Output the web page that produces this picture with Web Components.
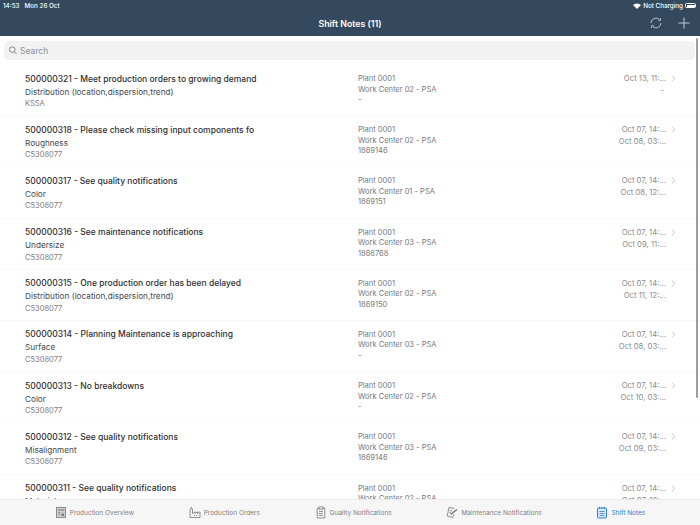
<!DOCTYPE html>
<html>
<head>
<meta charset="utf-8">
<title>Shift Notes</title>
<style>
  html, body { margin: 0; padding: 0; background: #fff; overflow: hidden; }
  body { font-family: Inter, "Liberation Sans", sans-serif; }
</style>
</head>
<body>
<shift-app></shift-app>

<script>
const NOTES = [
  ['500000321 - Meet production orders to growing demand', 'Distribution (location,dispersion,trend)', 'KSSA', 'Work Center 02 - PSA', '-', 'Oct 13, 11:...', '-'],
  ['500000318 - Please check missing input components fo', 'Roughness', 'C5308077', 'Work Center 02 - PSA', '1869146', 'Oct 07, 14:...', 'Oct 08, 03:...'],
  ['500000317 - See quality notifications', 'Color', 'C5308077', 'Work Center 01 - PSA', '1869151', 'Oct 07, 14:...', 'Oct 08, 12:...'],
  ['500000316 - See maintenance notifications', 'Undersize', 'C5308077', 'Work Center 03 - PSA', '1868768', 'Oct 07, 14:...', 'Oct 09, 11:...'],
  ['500000315 - One production order has been delayed', 'Distribution (location,dispersion,trend)', 'C5308077', 'Work Center 02 - PSA', '1869150', 'Oct 07, 14:...', 'Oct 11, 12:...'],
  ['500000314 - Planning Maintenance is approaching', 'Surface', 'C5308077', 'Work Center 03 - PSA', '-', 'Oct 07, 14:...', 'Oct 08, 03:...'],
  ['500000313 - No breakdowns', 'Color', 'C5308077', 'Work Center 02 - PSA', '-', 'Oct 07, 14:...', 'Oct 10, 03:...'],
  ['500000312 - See quality notifications', 'Misalignment', 'C5308077', 'Work Center 03 - PSA', '1869146', 'Oct 07, 14:...', 'Oct 09, 03:...'],
  ['500000311 - See quality notifications', 'Material', 'C5308077', 'Work Center 02 - PSA', '1869146', 'Oct 07, 14:...', 'Oct 07, 18:...']
];

const ICONS = {
  overview: '<rect x="1.5" y="1.5" width="9" height="10" fill="#cfcfd2" stroke="currentColor" stroke-width=".8"/><path d="M3 4h6" stroke="currentColor"/><path d="M3 6.500h2.500M3 8.500h2" stroke="currentColor" stroke-width=".7"/><path d="M6.500 10V7.500h2.500V10z" fill="currentColor"/>',
  orders: '<path d="M1 11.500V3h2.500v4.500L6 5.800v1.700l2.500-1.700v1.700L11 5.800v5.700z" fill="none" stroke="currentColor" stroke-width=".8"/><path d="M1.500 1.500h1.500" stroke="currentColor" stroke-width=".8"/><path d="M5 9.500h1M7.500 9.500h1" stroke="currentColor"/>',
  quality: '<path d="M4 2.200H2.200v9.800h7.600V2.200H8" fill="none" stroke="currentColor" stroke-width=".8"/><rect x="4" y="1" width="4" height="2.200" fill="none" stroke="currentColor" stroke-width=".8"/><path d="M4 5.500h4M4 7.500h4M4 9.500h4" stroke="currentColor" stroke-width=".8"/>',
  maintenance: '<path d="M8.500 2.500L3 1.500 1.200 10l5.500 1.500L8 8" fill="none" stroke="currentColor" stroke-width=".8"/><path d="M4.500 8.500l6.500-5" stroke="currentColor" stroke-width="1.500"/><path d="M3.500 4.500l3 .6M3 6.500l2 .4" stroke="currentColor" stroke-width=".7"/>',
  notes: '<rect x="1.500" y="2" width="9" height="10" rx="1" fill="#dbe9f9" stroke="currentColor"/><path d="M3.500 .8v2.200M6 .8v2.200M8.500 .8v2.200M3.500 5.500h5M3.500 7.500h5M3.500 9.500h5" stroke="currentColor" stroke-width=".8"/>'
};

class StatusBar extends HTMLElement {
  constructor() {
    super();
    this.attachShadow({mode: 'open'}).innerHTML = `
    <style>
      :host { display: flex; justify-content: space-between; align-items: center; height: 11px; padding: 0 4px 0 3px; font-size: 6.300px; font-weight: 500; color: #fff; }
      .left span { margin-right: 5px; }
      .right { display: flex; align-items: center; gap: 2px; }
      .batt { display: inline-block; width: 11px; height: 5px; border: .5px solid #fff; border-radius: 1.5px; background: #fff; background-clip: content-box; padding: .5px; box-sizing: border-box; }
    </style>
    <div class="left"><span>14:53</span><span>Mon 26 Oct</span></div>
    <div class="right">
      <svg width="8" height="6" viewBox="0 0 8 6"><path d="M4 6L0 2a5.800 5.800 0 0 1 8 0z" fill="#fff"/></svg>
      <span>Not Charging</span><span class="batt"></span>
    </div>`;
  }
}

class NavBar extends HTMLElement {
  constructor() {
    super();
    this.attachShadow({mode: 'open'}).innerHTML = `
    <style>
      :host { display: block; background: #34495e; height: 36px; box-sizing: border-box; }
      .bar { position: relative; height: 25px; display: flex; align-items: center; justify-content: center; color: #fff; font-size: 8.800px; font-weight: 600; }
      .actions { position: absolute; right: 9px; top: 5px; display: flex; gap: 14px; }
    </style>
    <status-bar></status-bar>
    <div class="bar">
      <slot></slot>
      <div class="actions">
        <svg width="14" height="14" viewBox="0 0 14 14" fill="none" stroke="#c3cbd3" stroke-width=".9">
          <path d="M2 7a5 5 0 0 1 8.500-3.500M12 7a5 5 0 0 1-8.500 3.500"/><path d="M11.500 2v2.300H9.200M2.500 12V9.700h2.300" stroke-width=".8"/>
        </svg>
        <svg width="14" height="14" viewBox="0 0 14 14" fill="none" stroke="#c3cbd3"><path d="M7 1.500v11M1.500 7h11"/></svg>
      </div>
    </div>`;
  }
}

class SearchBox extends HTMLElement {
  constructor() {
    super();
    this.attachShadow({mode: 'open'}).innerHTML = `
    <style>
      :host { display: block; padding: 5px 5px 5px 4px; background: #fff; }
      .box { display: flex; align-items: center; gap: 3px; height: 19px; padding-left: 5px; background: #f2f2f2; border-radius: 5px; color: #8e8e93; font-size: 8.500px; }
    </style>
    <div class="box">
      <svg width="8" height="9" viewBox="0 0 8 9" fill="none" stroke="#77777c" stroke-width=".9"><circle cx="3.300" cy="3.600" r="2.800"/><path d="M5.300 5.700L7.700 8.300"/></svg>
      <span>Search</span>
    </div>`;
  }
}

class NoteRow extends HTMLElement {
  constructor() {
    super();
    this.attachShadow({mode: 'open'});
  }

  set note(n) {
    this.shadowRoot.innerHTML = `
    <style>
      :host { display: grid; grid-template-columns: 333px 1fr auto 34px; height: 51.200px; box-sizing: border-box; padding: 8px 0 0 25px; border-bottom: 1px solid #f8f8f8; white-space: nowrap; }
      .title { font-size: 8.500px; font-weight: 500; color: #2f2f33; line-height: 11px; padding-top: .5px; }
      .sub { font-size: 8.200px; color: #48484c; line-height: 13px; margin-top: 1px; }
      .who { font-size: 7.500px; color: #7d7d82; line-height: 10px; margin-top: .5px; }
      .mid { font-size: 7.500px; color: #77777c; line-height: 10.500px; padding-top: 1px; }
      .dates { font-size: 7.700px; color: #8a8a8f; text-align: right; line-height: 12px; }
      .dash { padding-right: 2px; }
      svg { margin: 2px 0 0 5px; }
    </style>
    <div>
      <div class="title">${n[0]}</div>
      <div class="sub">${n[1]}</div>
      <div class="who">${n[2]}</div>
    </div>
    <div class="mid"><div>Plant 0001</div><div>${n[3]}</div><div>${n[4]}</div></div>
    <div class="dates"><div>${n[5]}</div><div class="${n[6] === '-' ? 'dash' : ''}">${n[6]}</div></div>
    <svg width="5" height="7" viewBox="0 0 5 7" fill="none" stroke="#b9b9be" stroke-width=".8"><path d="M.8.500L4 3.500.8 6.500"/></svg>`;
  }
}

class TabItem extends HTMLElement {
  constructor() {
    super();
    const icon = ICONS[this.getAttribute('icon')];
    this.attachShadow({mode: 'open'}).innerHTML = `
    <style>
      :host { display: flex; align-items: center; gap: 3px; font-size: 6.500px; color: #7f7f84; white-space: nowrap; }
      :host([active]) { color: #2f7fd8; }
      svg { color: #77777c; }
      :host([active]) svg { color: #2f7fd8; }
    </style>
    <svg width="12" height="13" viewBox="0 0 12 13">${icon}</svg>
    <slot></slot>`;
  }
}

class TabBar extends HTMLElement {
  constructor() {
    super();
    this.attachShadow({mode: 'open'}).innerHTML = `
    <style>
      :host { display: flex; justify-content: space-evenly; align-items: center; height: 26px; flex: none; background: #f6f6f6; border-top: 1px solid #ececec; box-sizing: border-box; }
    </style>
    <slot></slot>`;
  }
}

class ShiftApp extends HTMLElement {
  constructor() {
    super();
    this.attachShadow({mode: 'open'}).innerHTML = `
    <style>
      :host { display: flex; flex-direction: column; width: 700px; height: 525px; overflow: hidden; position: relative; }
      .list { flex: 1; overflow: hidden; min-height: 0; }
      .scroll { position: absolute; left: 696px; top: 38px; width: 1.500px; height: 360px; background: #9c9c9c; border-radius: 1px; }
    </style>
    <nav-bar>Shift Notes (11)</nav-bar>
    <search-box></search-box>
    <div class="list"></div>
    <div class="scroll"></div>
    <tab-bar>
      <tab-item icon="overview">Production Overview</tab-item>
      <tab-item icon="orders">Production Orders</tab-item>
      <tab-item icon="quality">Quality Notifications</tab-item>
      <tab-item icon="maintenance">Maintenance Notifications</tab-item>
      <tab-item icon="notes" active>Shift Notes</tab-item>
    </tab-bar>`;
    const list = this.shadowRoot.querySelector('.list');
    NOTES.forEach(n => {
      const row = document.createElement('note-row');
      row.note = n;
      list.appendChild(row);
    });
  }
}

customElements.define('status-bar', StatusBar);
customElements.define('nav-bar', NavBar);
customElements.define('search-box', SearchBox);
customElements.define('note-row', NoteRow);
customElements.define('tab-item', TabItem);
customElements.define('tab-bar', TabBar);
customElements.define('shift-app', ShiftApp);
</script>
</body>
</html>
